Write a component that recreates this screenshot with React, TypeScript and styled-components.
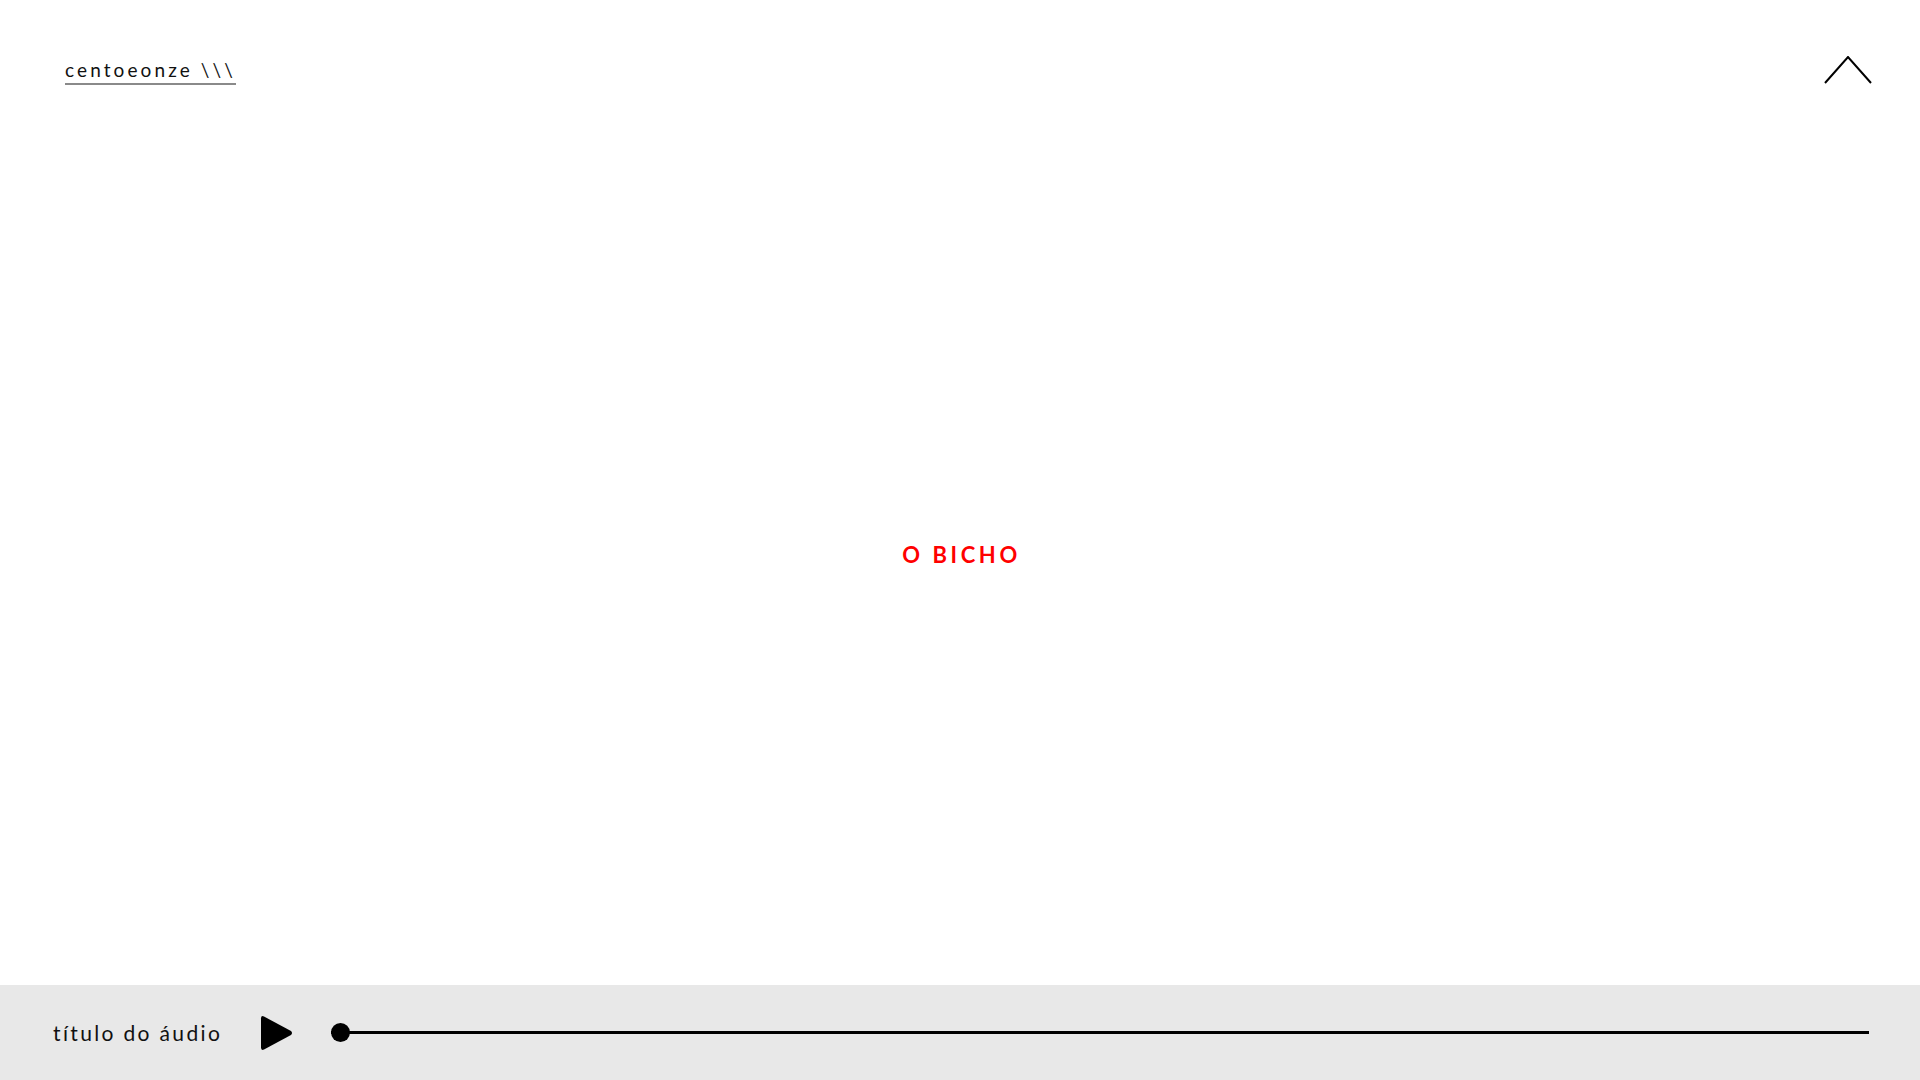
import React from "react";
import styled, { createGlobalStyle } from "styled-components";

const Global = createGlobalStyle`
  html, body { margin: 0; padding: 0; background: #ffffff; }
  body { font-family: "Lato", "Liberation Sans", sans-serif; }
`;

const Page = styled.div`
  display: flex;
  flex-direction: column;
  height: 100vh;
  width: 100vw;
  overflow: hidden;
`;

const Header = styled.header`
  height: 124px;
  flex: none;
  display: flex;
  justify-content: space-between;
  align-items: flex-start;
  padding: 0 48px 0 65px;
  box-sizing: border-box;
`;

const Logo = styled.a`
  margin-top: 59px;
  font-size: 19px;
  font-weight: 400;
  letter-spacing: 3.1px;
  color: #111;
  text-decoration: none;
  line-height: 22px;
  padding-bottom: 2px;
  border-bottom: 2px solid #8a8a8a;
`;

const UpButton = styled.button`
  margin-top: 56px;
  background: none;
  border: none;
  padding: 0;
  width: 48px;
  height: 28px;
  cursor: pointer;
`;

const Main = styled.main`
  flex: 1;
  display: flex;
  align-items: center;
  justify-content: center;
`;

const Title = styled.h1`
  margin: 0;
  color: #ff0000;
  font-size: 22px;
  font-weight: 700;
  letter-spacing: 3.6px;
  padding-left: 3px;
`;

const Player = styled.footer`
  flex: none;
  height: 95px;
  background: #e8e8e8;
  display: flex;
  align-items: center;
  padding: 0 51px 0 53px;
  box-sizing: border-box;
`;

const TrackName = styled.span`
  font-size: 21px;
  font-weight: 400;
  letter-spacing: 2.35px;
  color: #111;
  margin-right: 38px;
  white-space: nowrap;
`;

const PlayButton = styled.button`
  background: none;
  border: none;
  padding: 0;
  width: 33px;
  height: 36px;
  display: flex;
  cursor: pointer;
  margin-right: 38px;
`;

const Track = styled.div`
  flex: 1;
  position: relative;
  height: 20px;
  display: flex;
  align-items: center;
`;

const Line = styled.div`
  flex: 1;
  height: 3px;
  background: #000;
`;

const Knob = styled.div`
  position: absolute;
  left: 0;
  top: 50%;
  width: 19px;
  height: 19px;
  margin-top: -9.5px;
  border-radius: 50%;
  background: #000;
`;

export default function App() {
  return (
    <>
      <Global />
      <Page>
        <Header>
          <Logo href="#">centoeonze \\\</Logo>
          <UpButton aria-label="topo">
            <svg width="48" height="28" viewBox="0 0 48 28">
              <polyline points="1,27 24,1 47,27" fill="none" stroke="#000" strokeWidth="2" />
            </svg>
          </UpButton>
        </Header>
        <Main>
          <Title>O BICHO</Title>
        </Main>
        <Player>
          <TrackName>título do áudio</TrackName>
          <PlayButton aria-label="play">
            <svg width="33" height="36" viewBox="0 0 33 36">
              <path d="M4 1.5 L31 16 Q33 18 31 20 L4 34.5 Q1 36 1 32.5 L1 3.5 Q1 0 4 1.5 Z" fill="#000" />
            </svg>
          </PlayButton>
          <Track>
            <Line />
            <Knob />
          </Track>
        </Player>
      </Page>
    </>
  );
}
